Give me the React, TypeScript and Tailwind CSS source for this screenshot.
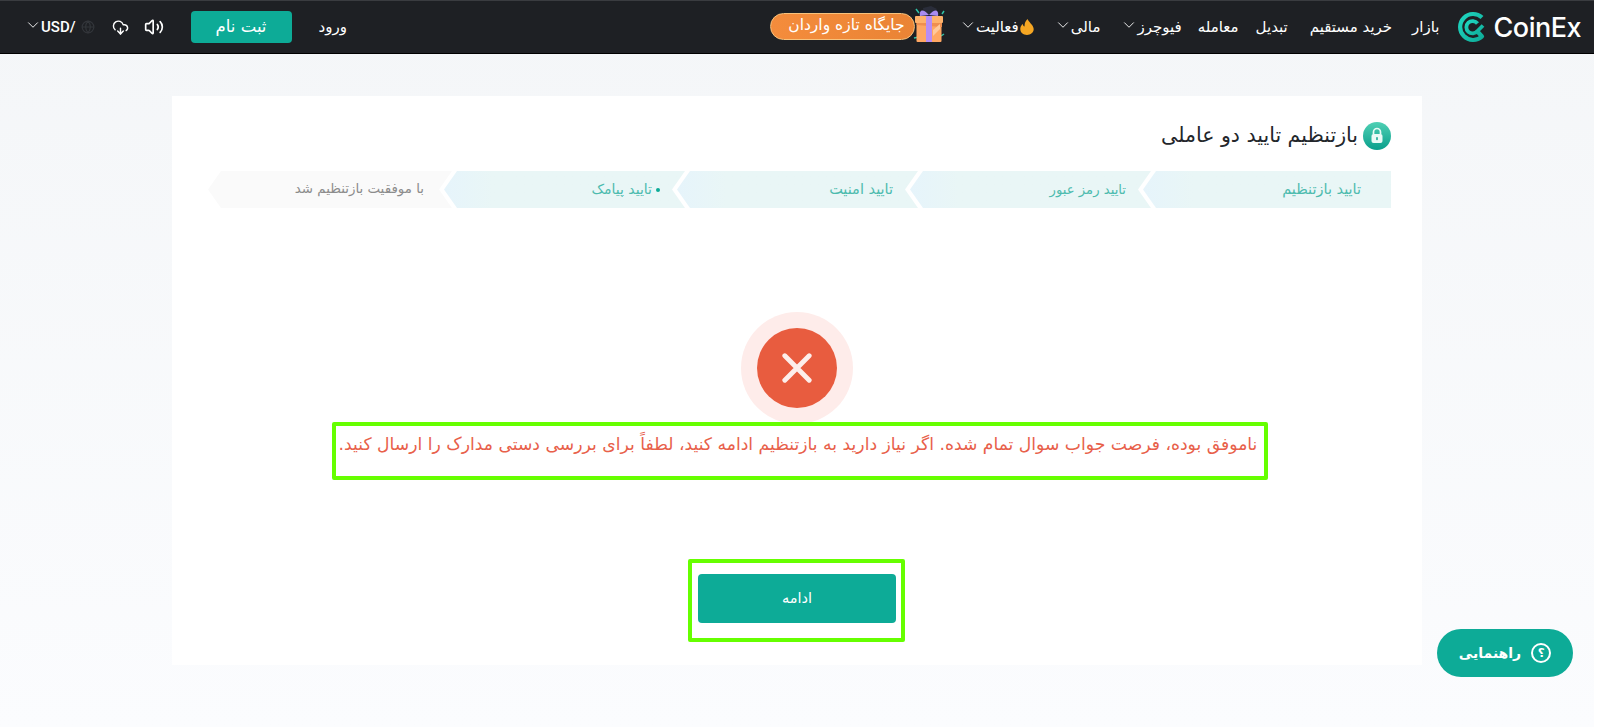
import { ChevronDown, CloudDownload, Globe, Volume2 } from 'lucide-react'

const FONT = 'font-["DejaVu_Sans",sans-serif]'

function Logo() {
  return (
    <svg viewBox="0 0 30 32" className="w-[30px] h-[32px]" fill="none">
      <defs>
        <linearGradient id="logoGrad" x1="0" y1="0" x2="1" y2="1">
          <stop offset="0" stopColor="#1fd6c0" />
          <stop offset="1" stopColor="#0fae9a" />
        </linearGradient>
      </defs>
      <path d="M25 6.5 A13 13 0 1 0 25 25.5 L20 20" stroke="url(#logoGrad)" strokeWidth="4.2" strokeLinejoin="round" />
      <path d="M20.5 12.5 A6.2 6.2 0 1 0 20.5 20 L26 14.5" stroke="url(#logoGrad)" strokeWidth="3.8" strokeLinejoin="round" />
    </svg>
  )
}

function Gift() {
  return (
    <svg viewBox="0 0 34 38" className="w-[34px] h-[38px]">
      <path d="M4 3 L7 7 M30 8 L32 5 M2 32 L7 31 M29 30 L32 28" stroke="#2fc4a8" strokeWidth="1.5" />
      <path d="M11 2 L19 0 L25 3 L20 9 L12 9 Z" fill="#2a2d3a" />
      <path d="M17 9 C10 1 7 5 8 10 Z M17 9 C24 1 27 5 26 10 Z" fill="#a98bf0" />
      <rect x="3" y="10" width="28" height="7" rx="1" fill="#ffb26b" />
      <rect x="4.5" y="17" width="25" height="19" rx="1" fill="#ffa763" />
      <path d="M4.5 17 H30 V21 L4.5 19 Z" fill="#f08f4f" />
      <rect x="14" y="10" width="6" height="26" fill="#b78df5" />
      <path d="M21 24 L28 18 V23 L21 30 Z" fill="#ffc99b" />
    </svg>
  )
}

function Flame() {
  return (
    <svg viewBox="0 0 14 16" className="w-[14px] h-[16px]">
      <path d="M7.5 0 C8.5 3 12.5 5 13.5 9 C14.5 13 11 16 7 16 C3 16 0 13.5 0.3 9.5 C0.5 7.5 1.5 6 2.8 5 C3 6.5 3.6 7.3 4.6 7.6 C4.3 4.5 5.5 2 7.5 0 Z" fill="#f5a623" />
    </svg>
  )
}

function Caret() {
  return <ChevronDown className="w-[18px] h-[18px] -mx-[4px] -mt-[4px] text-white" strokeWidth={1.2} />
}

function NavItem({ label, chevron, className = '' }: { label: string; chevron?: boolean; className?: string }) {
  return (
    <div className={`flex items-center gap-[3px] text-[15px] text-white whitespace-nowrap ${className}`}>
      {chevron && <Caret />}
      <span dir="rtl">{label}</span>
    </div>
  )
}

function Header() {
  return (
    <header className="h-[54px] bg-[#1e2024] border-t border-t-[#3a3c40] border-b border-b-black flex items-center justify-between">
      <div className="flex items-center text-white">
        <div className="ml-[28px]"><Caret /></div>
        <span className="ml-[3px] text-[15px] font-['Roboto',sans-serif] font-medium">USD/</span>
        <Globe className="w-[14px] h-[14px] ml-[5px] text-[#33363b]" />
        <CloudDownload className="w-[17px] h-[17px] ml-[17px]" />
        <Volume2 className="w-[20px] h-[20px] ml-[15px]" />
        <button dir="rtl" className="ml-[27px] w-[101px] h-[32px] rounded-[4px] bg-[#0dab97] text-[16.5px] text-white">
          ثبت نام
        </button>
        <span dir="rtl" className="ml-[27px] text-[15px]">ورود</span>
      </div>
      <div className="flex items-center pr-[13px]">
        <div className="flex items-center mr-[17px]">
          <div dir="rtl" className="w-[145px] h-[27px] -mt-[2px] rounded-full bg-gradient-to-l from-[#ea8435] to-[#f48c3c] border border-[#f7c27c] text-white text-[15.5px] flex items-center justify-center pl-[8px] whitespace-nowrap">
            جایگاه تازه واردان
          </div>
          <div className="-ml-[3px] -mt-[4px]"><Gift /></div>
        </div>
        <NavItem label="فعالیت" chevron />
        <div className="ml-[1px]"><Flame /></div>
        <NavItem label="مالی" chevron className="ml-[24px]" />
        <NavItem label="فیوچرز" chevron className="ml-[24px]" />
        <NavItem label="معامله" className="ml-[16px]" />
        <NavItem label="تبدیل" className="ml-[17px]" />
        <NavItem label="خرید مستقیم" className="ml-[22px]" />
        <NavItem label="بازار" className="ml-[20px]" />
        <div className="ml-[17px]"><Logo /></div>
        <span className="ml-[7px] text-[27px] leading-none font-medium text-white font-['Inter',sans-serif] tracking-[-0.5px]">CoinEx</span>
      </div>
    </header>
  )
}

const steps = [
  { label: 'تایید بازتنظیم', cls: 'w-[248px] pr-[30px] text-[14.5px] [clip-path:polygon(0_50%,13px_0,100%_0,100%_100%,13px_100%)]' },
  { label: 'تایید رمز عبور', cls: 'w-[241px] pr-[25px] text-[13.2px] [clip-path:polygon(0_50%,13px_0,100%_0,calc(100%-13px)_50%,100%_100%,13px_100%)]' },
  { label: 'تایید امنیت', cls: 'w-[241px] pr-[25px] text-[14.5px] [clip-path:polygon(0_50%,13px_0,100%_0,calc(100%-13px)_50%,100%_100%,13px_100%)]' },
  { label: 'تایید پیامک', cls: 'w-[241px] pr-[25px] text-[14px] [clip-path:polygon(0_50%,13px_0,100%_0,calc(100%-13px)_50%,100%_100%,13px_100%)]', current: true },
]

function Steps() {
  return (
    <div dir="rtl" className="flex mt-[20px] h-[37px]">
      {steps.map((s) => (
        <div key={s.label} className={`${s.cls} -ml-[8px] h-full flex items-center gap-[4px] bg-gradient-to-l from-[#e9f6f6] from-80% to-[#e6f4fb] text-[#4dbbae]`}>
          {s.current && <span className="w-[4px] h-[4px] rounded-full bg-[#0dab97]" />}
          {s.label}
        </div>
      ))}
      <div className="w-[244px] pr-[28px] h-full flex items-center bg-[#fafafa] text-[13.4px] text-[#8c8c8c] [clip-path:polygon(0_50%,13px_0,100%_0,calc(100%-13px)_50%,100%_100%,13px_100%)]">
        با موفقیت بازتنظیم شد
      </div>
    </div>
  )
}

function LockBadge() {
  return (
    <svg viewBox="0 0 28 28" className="w-[28px] h-[28px]">
      <defs>
        <linearGradient id="lockGrad" x1="0" y1="0" x2="0" y2="1">
          <stop offset="0" stopColor="#4fd0b4" />
          <stop offset="1" stopColor="#0a9f8c" />
        </linearGradient>
      </defs>
      <circle cx="14" cy="14" r="14" fill="url(#lockGrad)" />
      <path d="M10.5 12 V10 A3.5 3.5 0 0 1 17.5 10 V12" stroke="#eafaf6" strokeWidth="1.7" fill="none" />
      <rect x="8.5" y="12" width="11" height="9" rx="2" fill="#eafaf6" />
      <rect x="13.2" y="15" width="1.6" height="3.2" rx="0.8" fill="#16a892" />
    </svg>
  )
}

export default function App() {
  return (
    <div className={`h-[727px] overflow-hidden bg-white ${FONT}`}>
      <div className="mr-[6px] h-full bg-gradient-to-b from-[#f4f6f8] to-[#fbfcfe]">
        <Header />
        <main className="mx-[172px] mt-[42px] h-[569px] bg-white flex flex-col px-[31px]">
          <div dir="rtl" className="flex items-center gap-[5px] mt-[24px] text-[20.5px] leading-[31px] text-[#23262b]">
            <LockBadge />
            <span>بازتنظیم تایید دو عاملی</span>
          </div>
          <Steps />
          <div className="flex flex-col items-center">
            <div className="mt-[104px] w-[112px] h-[112px] rounded-full bg-[#feecea] flex items-center justify-center">
              <div className="w-[80px] h-[80px] rounded-full bg-[#e85c3f] flex items-center justify-center">
                <svg viewBox="0 0 32 32" className="w-[30px] h-[30px]">
                  <path d="M3 3 L29 29 M29 3 L3 29" stroke="#fdeeeb" strokeWidth="5.2" strokeLinecap="round" />
                </svg>
              </div>
            </div>
            <div dir="rtl" className="relative -mt-[2px] ml-[6px] w-[936px] h-[58px] border-[4px] border-[#66ff00] rounded-[2px] bg-white text-center text-[17.2px] text-[#e8604a] whitespace-nowrap pt-[6px] pr-[4px]">
              ناموفق بوده، فرصت جواب سوال تمام شده. اگر نیاز دارید به بازتنظیم ادامه کنید، لطفاً برای بررسی دستی مدارک را ارسال کنید.
            </div>
            <div className="mt-[79px] -ml-[2px] w-[217px] h-[83px] border-[4px] border-[#66ff00] rounded-[2px] flex items-start justify-center pt-[11px] pl-[2px]">
              <button dir="rtl" className="w-[198px] h-[49px] rounded-[4px] bg-[#0dab97] text-white text-[14.5px]">
                ادامه
              </button>
            </div>
          </div>
        </main>
      </div>
      <button dir="rtl" className="fixed left-[1437px] top-[629px] w-[136px] h-[48px] rounded-full bg-[#0dab97] text-white text-[14px] font-bold flex items-center justify-center gap-[10px]">
        <span className="w-[20px] h-[20px] rounded-full border-2 border-white flex items-center justify-center text-[12px] leading-none">؟</span>
        راهنمایی
      </button>
    </div>
  )
}
